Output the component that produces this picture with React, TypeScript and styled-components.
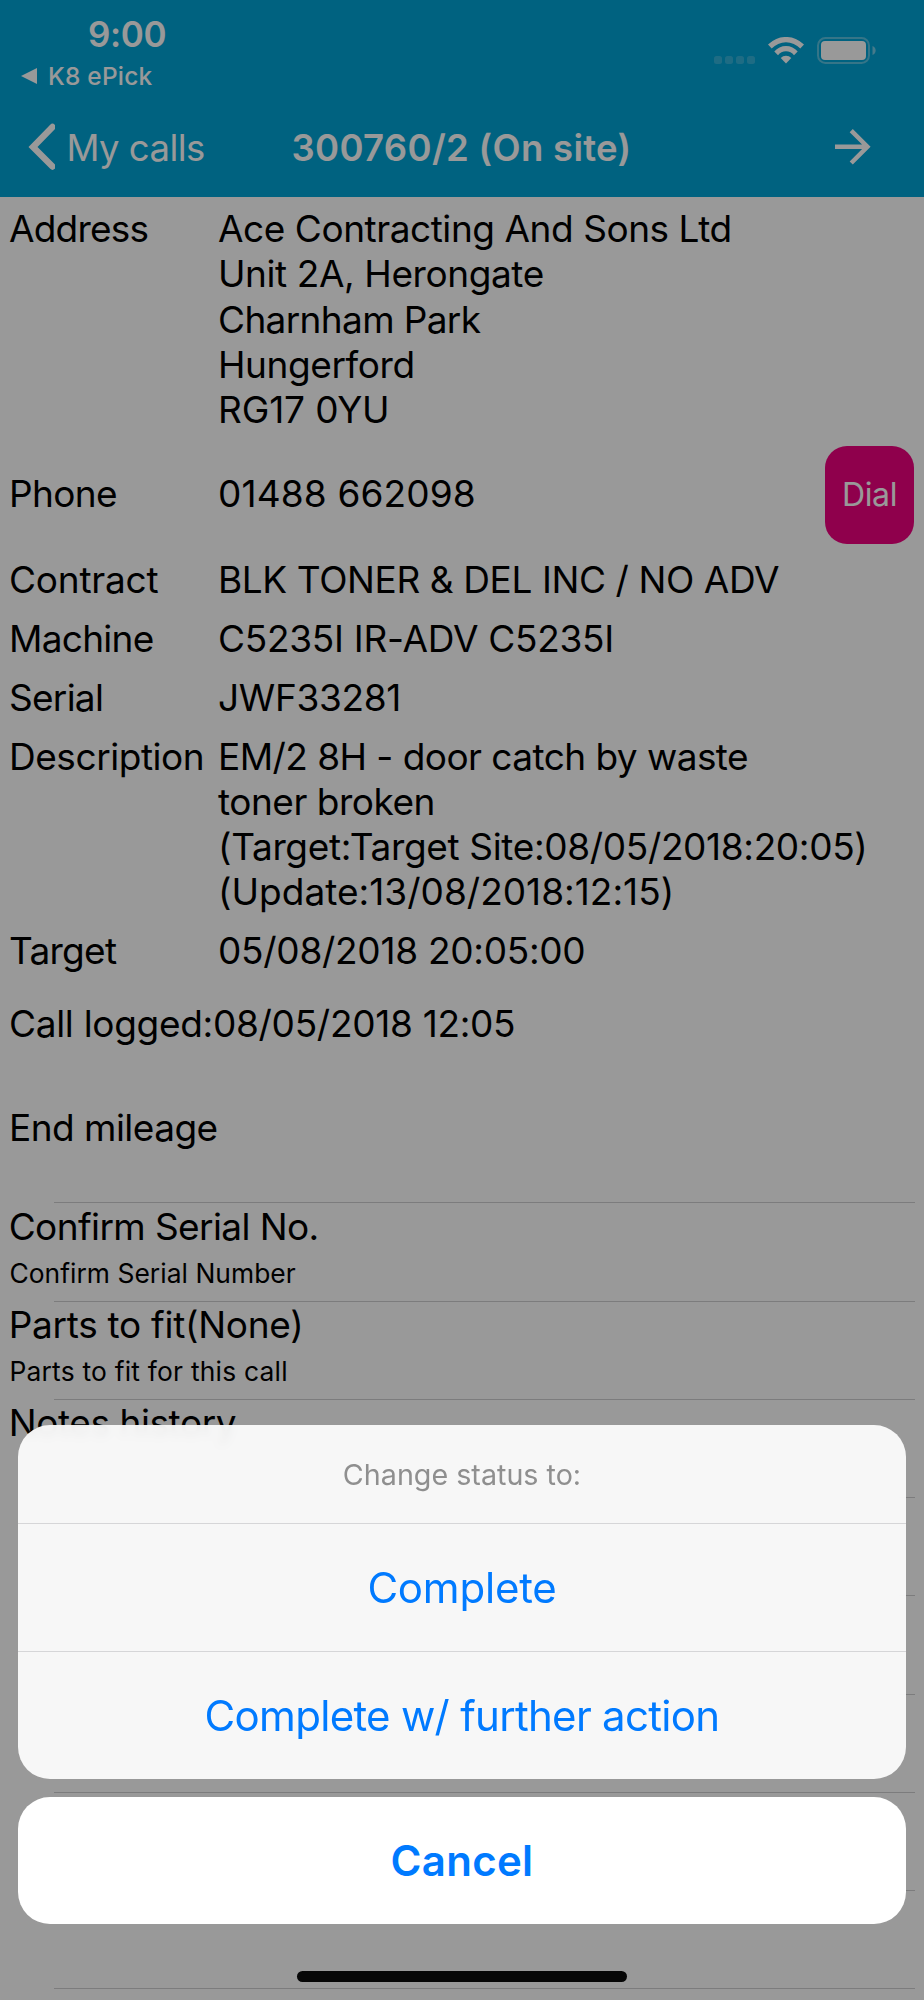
import React from 'react';
import styled, { createGlobalStyle } from 'styled-components';

const GlobalStyle = createGlobalStyle`
  * { box-sizing: border-box; }
  body {
    margin: 0;
    background: #fff;
    font-family: Inter, "Liberation Sans", sans-serif;
    color: #000;
    overflow: hidden;
  }
  button {
    font: inherit;
    border: 0;
    padding: 0;
    background: none;
    color: inherit;
  }
`;

/* ---------- Screen ---------- */

const Screen = styled.div`
  position: relative;
  width: 924px;
  height: 2000px;
  overflow: hidden;
  background: #fff;
`;

const Header = styled.header`
  height: 197px;
  background: #00a3d5;
  color: #fff;
`;

const StatusBar = styled.div`
  display: flex;
  justify-content: space-between;
  height: 98px;
  padding: 14px 47px 0 21px;
`;

const Clock = styled.div`
  margin-left: 67px;
  font-size: 35px;
  line-height: 40px;
  font-weight: 600;
  letter-spacing: -0.4px;
`;

const ReturnLink = styled.div`
  display: flex;
  align-items: center;
  gap: 11px;
  margin-top: 7px;
  font-size: 24.4px;
  line-height: 30px;
  font-weight: 500;
  letter-spacing: 0.25px;
`;

const Indicators = styled.div`
  display: flex;
  align-items: flex-end;
  height: 50px;
`;

const SignalDots = styled.div`
  display: flex;
  gap: 3.2px;
  margin-right: 12.6px;
`;

const SignalDot = styled.span`
  width: 8px;
  height: 8px;
  border-radius: 2.5px;
  background: rgba(255, 255, 255, 0.2);
`;

const StatusGlyphs = styled.div`
  display: flex;
  gap: 13px;
`;

const NavBar = styled.nav`
  display: grid;
  grid-template-columns: 1fr auto 1fr;
  align-items: center;
  height: 98px;
`;

const BackButton = styled.button`
  display: flex;
  align-items: center;
  gap: 11.5px;
  padding-left: 27px;
  font-size: 36.5px;
  line-height: 46px;
  letter-spacing: -0.55px;
`;

const BackLabel = styled.span`
  padding-top: 1px;
`;

const NavTitle = styled.h1`
  margin: 0 1px 0 0;
  padding-top: 1px;
  font-size: 36.5px;
  line-height: 46px;
  font-weight: 600;
  letter-spacing: 0.31px;
  white-space: nowrap;
`;

const NextButton = styled.button`
  display: flex;
  justify-self: end;
  margin-right: 53px;
`;

/* ---------- Call details ---------- */

const Details = styled.section`
  padding-top: 2.3px;
  font-size: 37px;
  line-height: 45.25px;
`;

const DetailRow = styled.div`
  display: grid;
  grid-template-columns: 209px 1fr auto;
  align-items: start;
  padding: 6.75px 10px 6.75px 9px;
`;

const CentredRow = styled(DetailRow)`
  align-items: center;
`;

const Line = styled.div<{ $track?: number }>`
  letter-spacing: ${(p) => (p.$track ?? 0) - 0.53}px;
  white-space: nowrap;
`;

const PhoneLine = styled(Line)`
  padding-bottom: 2.5px;
`;

const DialButton = styled.button`
  width: 89px;
  height: 98px;
  border-radius: 22px;
  background: #ef007f;
  color: #fff;
  font-size: 32px;
  letter-spacing: -0.4px;
`;

const LoggedLine = styled(Line)`
  margin: 21px 0 0 9px;
`;

const MileageLine = styled(Line)`
  margin: 58.5px 0 0 9px;
  height: 97.5px;
`;

/* ---------- Option list ---------- */

const Option = styled.div`
  height: 98.25px;

  &::before {
    content: "";
    display: block;
    height: 1px;
    margin: 0 9px 0 54px;
    background: #cfcfd1;
  }
`;

const OptionTitle = styled.div<{ $track?: number }>`
  padding: 0.3px 0 0 8.7px;
  font-size: 37px;
  line-height: 45.25px;
  letter-spacing: ${(p) => (p.$track ?? 0) - 0.5}px;
`;

const OptionHint = styled.div<{ $track?: number }>`
  padding: 8px 0 0 9.4px;
  font-size: 26.4px;
  line-height: 33px;
  letter-spacing: ${(p) => (p.$track ?? 0) - 0.18}px;
`;

/* ---------- Action sheet ---------- */

const Dimmer = styled.div`
  position: absolute;
  inset: 0;
  background: rgba(0, 0, 0, 0.4);
`;

const Sheet = styled.div`
  position: absolute;
  left: 18px;
  right: 18px;
  bottom: 76px;
  display: flex;
  flex-direction: column;
  gap: 18px;
  text-align: center;
`;

const ActionGroup = styled.div`
  border-radius: 32px;
  overflow: hidden;
  background: rgba(254, 254, 254, 0.93);
  backdrop-filter: blur(4px);
`;

const SheetTitle = styled.div`
  height: 98px;
  padding-top: 1px;
  font-size: 28.7px;
  line-height: 98px;
  color: #8f8f8f;
`;

const Action = styled.button<{ $track?: number }>`
  display: block;
  width: 100%;
  height: 128px;
  border-top: 1px solid #d6d6d8;
  font-size: 42px;
  line-height: 127px;
  letter-spacing: ${(p) => p.$track ?? 0}px;
  color: #007aff;
`;

const CancelButton = styled.button`
  height: 127px;
  border-radius: 32px;
  background: #fff;
  font-size: 42px;
  font-weight: 600;
  letter-spacing: 0.3px;
  color: #007aff;
`;

const HomeIndicator = styled.div`
  position: absolute;
  left: 297px;
  bottom: 18px;
  width: 330px;
  height: 11px;
  border-radius: 6px;
  background: #070707;
`;

/* ---------- Icons ---------- */

const WifiIcon = () => (
  <svg width="36" height="27" viewBox="0 0 36 27" fill="currentColor">
    <path d="M0 7.6A25 25 0 0 1 36 7.6L32.3 11.4A19.8 19.8 0 0 0 3.7 11.4Z" />
    <path d="M6.3 14.5A15.2 15.2 0 0 1 29.7 14.5L26 18.2A9.9 9.9 0 0 0 10 18.2Z" />
    <path d="M12.7 21.1A7 7 0 0 1 23.3 21.1L18 26.5Z" />
  </svg>
);

const BatteryIcon = () => (
  <svg width="60" height="27" viewBox="0 0 60 27" fill="currentColor">
    <rect x="1" y="1" width="51" height="25" rx="7.5" fill="none" stroke="currentColor" strokeWidth="2" opacity="0.35" />
    <rect x="4" y="4" width="45" height="19" rx="4" />
    <path d="M55.5 9a4.8 4.8 0 0 1 0 9Z" opacity="0.45" />
  </svg>
);

const BackChevron = () => (
  <svg width="28" height="48" viewBox="0 0 28 48" fill="none">
    <path d="M25.5 4L6 24L25.5 43.5" stroke="currentColor" strokeWidth="6.4" strokeLinecap="round" strokeLinejoin="miter" />
  </svg>
);

const ForwardArrow = () => (
  <svg width="35.6" height="35.6" viewBox="4 4 16 16" fill="currentColor">
    <path d="M12 4l-1.41 1.41L16.17 11H4v2h12.17l-5.58 5.59L12 20l8-8z" />
  </svg>
);

/* ---------- Data ---------- */

type Text = [text: string, track?: number];

const callRows: { label: Text; lines: Text[] }[] = [
  { label: ['Contract', 0.3], lines: [['BLK TONER & DEL INC / NO ADV', 0.13]] },
  { label: ['Machine', -0.2], lines: [['C5235I IR-ADV C5235I', 0.25]] },
  { label: ['Serial', -0.2], lines: [['JWF33281', 0.2]] },
  {
    label: ['Description', 0.08],
    lines: [
      ['EM/2 8H - door catch by waste', -0.02],
      ['toner broken', 0.05],
      ['(Target:Target Site:08/05/2018:20:05)', 0.18],
      ['(Update:13/08/2018:12:15)', 0.55],
    ],
  },
  { label: ['Target', -0.2], lines: [['05/08/2018 20:05:00', 0.25]] },
];

const addressLines: Text[] = [
  ['Ace Contracting And Sons Ltd', 0.08],
  ['Unit 2A, Herongate', 0.12],
  ['Charnham Park', -0.12],
  ['Hungerford', 0.12],
  ['RG17 0YU', 0.4],
];

const options: { title?: Text; hint?: Text }[] = [
  { title: ['Confirm Serial No.', -0.1], hint: ['Confirm Serial Number', 0.22] },
  { title: ['Parts to fit(None)', 0.22], hint: ['Parts to fit for this call', 0.4] },
  { title: ['Notes history', 0.08] },
  {},
  {},
  {},
  {},
  {},
  {},
];

const Lines = ({ items }: { items: Text[] }) => (
  <div>
    {items.map(([text, track]) => (
      <Line key={text} $track={track}>{text}</Line>
    ))}
  </div>
);

export default function App() {
  return (
    <>
      <GlobalStyle />
      <Screen>
        <Header>
          <StatusBar>
            <div>
              <Clock>9:00</Clock>
              <ReturnLink>
                <svg width="16" height="16" viewBox="0 0 16 16" fill="currentColor">
                  <path d="M0 8L16 0V16Z" />
                </svg>
                K8 ePick
              </ReturnLink>
            </div>
            <Indicators>
              <SignalDots>
                <SignalDot />
                <SignalDot />
                <SignalDot />
                <SignalDot />
              </SignalDots>
              <StatusGlyphs>
                <WifiIcon />
                <BatteryIcon />
              </StatusGlyphs>
            </Indicators>
          </StatusBar>
          <NavBar>
            <BackButton>
              <BackChevron />
              <BackLabel>My calls</BackLabel>
            </BackButton>
            <NavTitle>300760/2 (On site)</NavTitle>
            <NextButton aria-label="Change status">
              <ForwardArrow />
            </NextButton>
          </NavBar>
        </Header>

        <Details>
          <DetailRow>
            <Line $track={-0.25}>Address</Line>
            <Lines items={addressLines} />
          </DetailRow>
          <CentredRow>
            <PhoneLine $track={-0.1}>Phone</PhoneLine>
            <PhoneLine $track={0.68}>01488 662098</PhoneLine>
            <DialButton>Dial</DialButton>
          </CentredRow>
          {callRows.map(({ label, lines }) => (
            <DetailRow key={label[0]}>
              <Line $track={label[1]}>{label[0]}</Line>
              <Lines items={lines} />
            </DetailRow>
          ))}
          <LoggedLine $track={0.23}>Call logged:08/05/2018 12:05</LoggedLine>
          <MileageLine $track={0}>End mileage</MileageLine>
        </Details>

        {options.map(({ title, hint }, i) => (
          <Option key={i}>
            {title && <OptionTitle $track={title[1]}>{title[0]}</OptionTitle>}
            {hint && <OptionHint $track={hint[1]}>{hint[0]}</OptionHint>}
          </Option>
        ))}

        <Dimmer />

        <Sheet>
          <ActionGroup>
            <SheetTitle>Change status to:</SheetTitle>
            <Action $track={-0.2}>Complete</Action>
            <Action $track={-0.7}>Complete w/ further action</Action>
          </ActionGroup>
          <CancelButton>Cancel</CancelButton>
        </Sheet>
        <HomeIndicator />
      </Screen>
    </>
  );
}
